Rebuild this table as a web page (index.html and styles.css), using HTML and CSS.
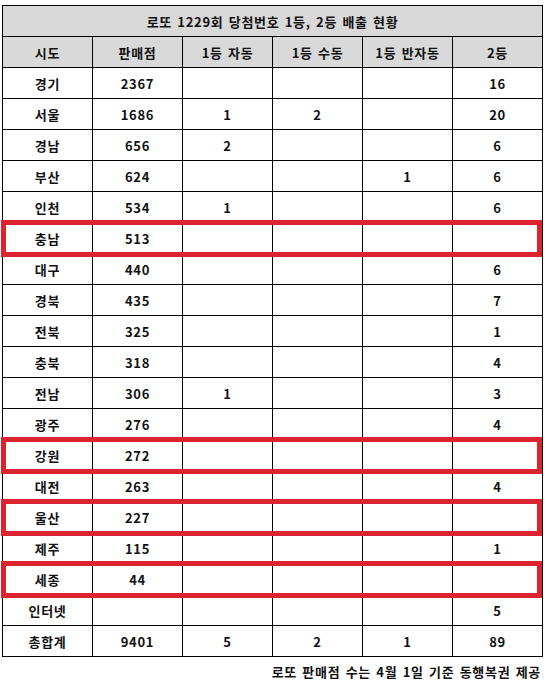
FILE: index.html
```html
<!DOCTYPE html>
<html lang="ko">
<head>
<meta charset="utf-8">
<link rel="stylesheet" href="styles.css">
</head>
<body>
<div class="wrap">
<table class="lotto">
  <colgroup><col><col><col><col><col><col></colgroup>
  <thead>
    <tr class="title"><th colspan="6">로또 1229회 당첨번호 1등, 2등 배출 현황</th></tr>
    <tr class="head"><th>시도</th><th>판매점</th><th>1등 자동</th><th>1등 수동</th><th>1등 반자동</th><th>2등</th></tr>
  </thead>
  <tbody>
    <tr><td>경기</td><td>2367</td><td></td><td></td><td></td><td>16</td></tr>
    <tr><td>서울</td><td>1686</td><td>1</td><td>2</td><td></td><td>20</td></tr>
    <tr><td>경남</td><td>656</td><td>2</td><td></td><td></td><td>6</td></tr>
    <tr><td>부산</td><td>624</td><td></td><td></td><td>1</td><td>6</td></tr>
    <tr><td>인천</td><td>534</td><td>1</td><td></td><td></td><td>6</td></tr>
    <tr><td class="hl">충남</td><td>513</td><td></td><td></td><td></td><td></td></tr>
    <tr><td>대구</td><td>440</td><td></td><td></td><td></td><td>6</td></tr>
    <tr><td>경북</td><td>435</td><td></td><td></td><td></td><td>7</td></tr>
    <tr><td>전북</td><td>325</td><td></td><td></td><td></td><td>1</td></tr>
    <tr><td>충북</td><td>318</td><td></td><td></td><td></td><td>4</td></tr>
    <tr><td>전남</td><td>306</td><td>1</td><td></td><td></td><td>3</td></tr>
    <tr><td>광주</td><td>276</td><td></td><td></td><td></td><td>4</td></tr>
    <tr><td class="hl">강원</td><td>272</td><td></td><td></td><td></td><td></td></tr>
    <tr><td>대전</td><td>263</td><td></td><td></td><td></td><td>4</td></tr>
    <tr><td class="hl">울산</td><td>227</td><td></td><td></td><td></td><td></td></tr>
    <tr><td>제주</td><td>115</td><td></td><td></td><td></td><td>1</td></tr>
    <tr><td class="hl">세종</td><td>44</td><td></td><td></td><td></td><td></td></tr>
    <tr><td>인터넷</td><td></td><td></td><td></td><td></td><td>5</td></tr>
    <tr><td>총합계</td><td>9401</td><td>5</td><td>2</td><td>1</td><td>89</td></tr>
  </tbody>
</table>
<p class="note">로또 판매점 수는 4월 1일 기준 동행복권 제공</p>
</div>
</body>
</html>
```

FILE: styles.css
```css
html, body {
  margin: 0;
  padding: 0;
  background: #fff;
}
body {
  font-family: "Noto Sans CJK KR", "Noto Sans", sans-serif;
  font-weight: 700;
  font-size: 13px;
  letter-spacing: 0.7px;
  word-spacing: 1px;
  color: #111;
}
.wrap {
  padding: 5px 0 0 2px;
  width: 541px;
}
.lotto {
  border-collapse: collapse;
  table-layout: fixed;
  width: 541px;
}
.lotto col {
  width: 90px;
}
.lotto th,
.lotto td {
  border: 1px solid #000;
  height: 31px;
  padding: 0;
  box-sizing: border-box;
  text-align: center;
  vertical-align: middle;
  font-weight: 700;
  line-height: 1;
}
.lotto .title th,
.lotto .head th {
  background: #d9d9d9;
}
.lotto td.hl {
  position: relative;
}
.lotto td.hl::after {
  content: "";
  position: absolute;
  left: -2px;
  top: -3px;
  width: 541px;
  height: 37px;
  box-sizing: border-box;
  border: 5px solid #dc2431;
  pointer-events: none;
}
.note {
  margin: 6px 0 0;
  text-align: right;
  padding-right: 2px;
  line-height: 18px;
}
```
